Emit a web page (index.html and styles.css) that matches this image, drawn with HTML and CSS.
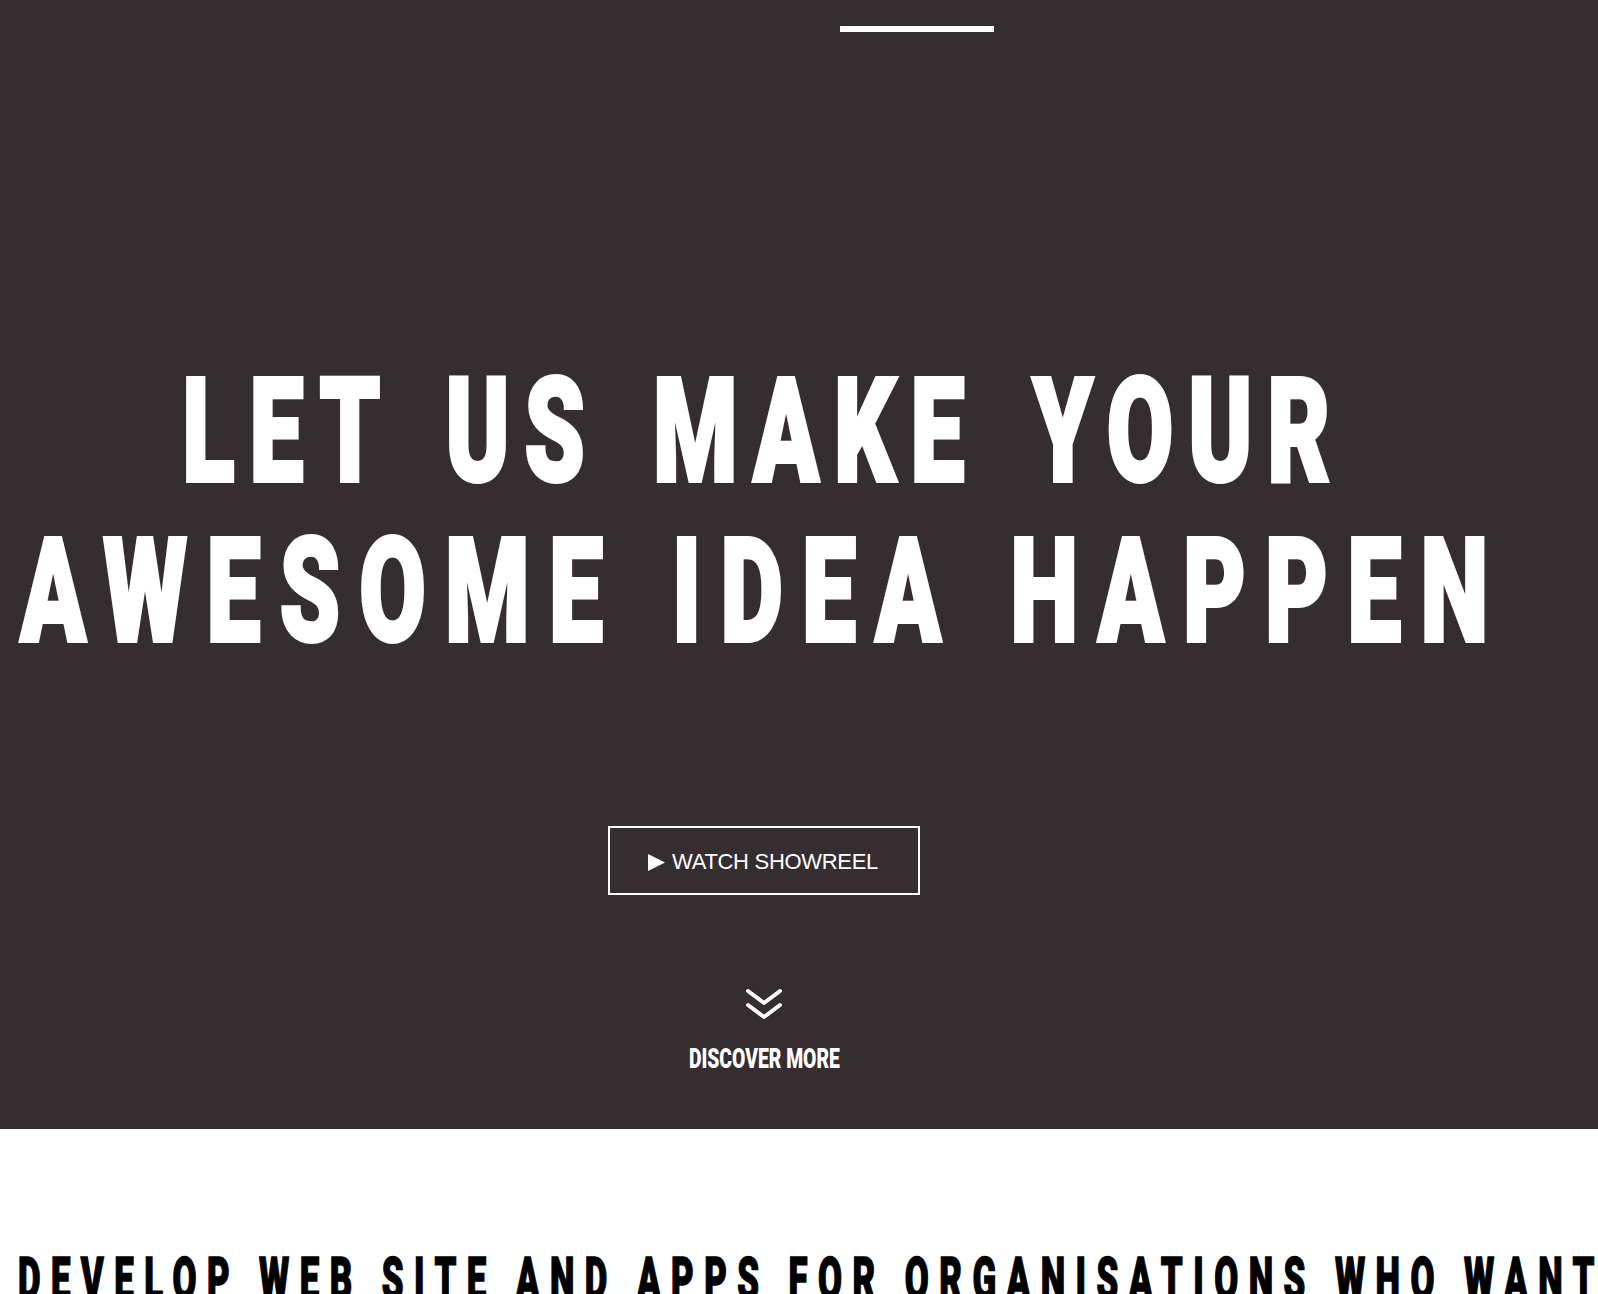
FILE: index.html
```html
<!DOCTYPE html>
<html lang="en">
<head>
<meta charset="utf-8">
<title>Let us make your awesome idea happen</title>
<link rel="stylesheet" href="styles.css">
</head>
<body>
<section class="hero">
  <nav class="hero-nav"><span class="nav-line"></span></nav>
  <h1 class="headline">
    <span class="headline-line headline-line--first">LET US MAKE YOUR</span>
    <span class="headline-line headline-line--second">AWESOME IDEA HAPPEN</span>
  </h1>
  <a class="btn-showreel" href="#">
    <svg class="play-icon" width="17" height="17" viewBox="0 0 17 17" aria-hidden="true"><polygon points="0,0 17,8.5 0,17" fill="#fff"/></svg>
    <span>WATCH SHOWREEL</span>
  </a>
  <a class="discover" href="#">
    <svg class="discover-icon" width="40" height="36" viewBox="0 0 40 36" aria-hidden="true">
      <polyline points="4,6 20,18 36,6" fill="none" stroke="#fff" stroke-width="4" stroke-linecap="round" stroke-linejoin="round"/>
      <polyline points="4,20 20,32 36,20" fill="none" stroke="#fff" stroke-width="4" stroke-linecap="round" stroke-linejoin="round"/>
    </svg>
    <span class="discover-label">DISCOVER MORE</span>
  </a>
</section>
<section class="intro">
  <h2 class="intro-title">DEVELOP WEB SITE AND APPS FOR ORGANISATIONS WHO WANT</h2>
</section>
</body>
</html>
```
FILE: styles.css
```css
* { box-sizing: border-box; }
html { scrollbar-width: none; }
html::-webkit-scrollbar, body::-webkit-scrollbar { width: 0; height: 0; display: none; }
html, body { margin: 0; padding: 0; }
body {
  background: #fff;
  overflow-x: hidden;
  font-family: "Liberation Sans", Arial, sans-serif;
}

.hero {
  background: #362d30;
  height: 1129px;
  padding-right: 70px;
  display: flex;
  flex-direction: column;
  align-items: center;
}

.hero-nav {
  align-self: stretch;
  padding: 26px 0 0 840px;
}
.nav-line {
  display: block;
  width: 154px;
  height: 6px;
  background: #fff;
}

.headline {
  margin: 320px 0 0;
  align-self: stretch;
  display: flex;
  flex-direction: column;
  align-items: center;
  color: #fff;
  font-family: Roboto, "Liberation Sans", sans-serif;
  font-weight: 900;
  font-size: 144px;
  line-height: 160px;
  white-space: nowrap;
  -webkit-text-stroke: 4px #fff;
}
.headline-line {
  display: block;
  transform: scaleX(0.67);
}
.headline-line--first { letter-spacing: 22.3px; word-spacing: 21px; }
.headline-line--second { letter-spacing: 28.7px; word-spacing: 10px; }

.btn-showreel {
  margin-top: 154px;
  width: 312px;
  height: 69px;
  border: 2px solid #fff;
  padding: 3px 0 0 38px;
  display: flex;
  align-items: center;
  gap: 7px;
  color: #fff;
  text-decoration: none;
  font-family: "Liberation Sans", Arial, sans-serif;
  font-size: 22px;
  line-height: 22px;
  letter-spacing: -0.3px;
  white-space: nowrap;
}
.play-icon { flex: none; }

.discover {
  margin-top: 90px;
  display: flex;
  flex-direction: column;
  align-items: center;
  gap: 24px;
  color: #fff;
  text-decoration: none;
}
.discover-icon { display: block; }
.discover-label {
  display: block;
  font-family: Roboto, "Liberation Sans", sans-serif;
  font-weight: 900;
  font-size: 28px;
  line-height: 28px;
  white-space: nowrap;
  transform: scaleX(0.69);
}

.intro {
  padding: 120px 0 0 18px;
  height: 200px;
  overflow: hidden;
}
.intro-title {
  margin: 0;
  display: inline-block;
  color: #000;
  font-family: Roboto, "Liberation Sans", sans-serif;
  font-weight: 900;
  font-size: 60px;
  line-height: 60px;
  letter-spacing: 18px;
  white-space: nowrap;
  -webkit-text-stroke: 1.5px #000;
  transform: scaleX(0.58);
  transform-origin: left center;
}
```
